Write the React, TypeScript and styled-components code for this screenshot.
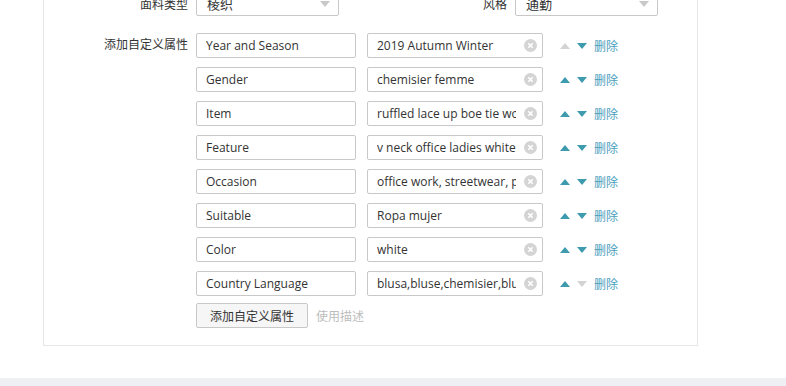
import React from "react";
import styled, { createGlobalStyle } from "styled-components";

const Global = createGlobalStyle`
  html, body { margin: 0; padding: 0; background: #fff; }
  body { overflow: hidden; font-family: "Open Sans", "Noto Sans CJK SC", sans-serif; color: #333; }
`;

const Page = styled.div`
  width: 786px;
  height: 386px;
  display: flex;
  flex-direction: column;
  overflow: hidden;
`;

const Content = styled.div`
  flex: 1;
  padding: 0 88px 0 43px;
`;

const Panel = styled.div`
  margin-top: -19px;
  padding: 10px 0 17px;
  border: 1px solid #e6e6e6;
  border-top: none;
  width: 653px;
  display: flex;
  flex-direction: column;
  gap: 17px;
`;

const FieldRow = styled.div`
  display: flex;
  align-items: flex-start;
`;

const Label = styled.div<{ $w?: number }>`
  width: ${(p) => p.$w ?? 152}px;
  box-sizing: border-box;
  padding-right: 8px;
  text-align: right;
  font-family: "Noto Sans CJK SC", sans-serif;
  font-size: 12px;
  line-height: ${(p) => (p.$w ? 25 : 22)}px;
  color: #333;
  flex-shrink: 0;
`;

const Select = styled.div<{ $ml?: number }>`
  position: relative;
  width: 143px;
  height: 25px;
  box-sizing: border-box;
  border: 1px solid #c8c8c8;
  border-radius: 2px;
  padding-left: 10px;
  font-family: "Noto Sans CJK SC", sans-serif;
  font-size: 13px;
  line-height: 23px;
  color: #333;
  margin-right: ${(p) => p.$ml ?? 0}px;
`;

const Caret = styled.span`
  position: absolute;
  right: 8px;
  top: 9px;
  width: 0;
  height: 0;
  border-left: 5px solid transparent;
  border-right: 5px solid transparent;
  border-top: 6px solid #c9c9c9;
`;

const AttrList = styled.div`
  display: flex;
  flex-direction: column;
  gap: 9px;
`;

const AttrRow = styled.div`
  display: flex;
  align-items: center;
  height: 25px;
`;

const TextInput = styled.input<{ $w: number; $pr?: number }>`
  width: ${(p) => p.$w}px;
  height: 25px;
  box-sizing: border-box;
  border: 1px solid #c8c8c8;
  border-radius: 2px;
  padding: 0 ${(p) => p.$pr ?? 6}px 0 9px;
  font-family: "Open Sans", "Noto Sans CJK SC", sans-serif;
  font-size: 12px;
  color: #333;
  background: #fff;
  outline: none;
`;

const ValueBox = styled.div`
  position: relative;
  margin-left: 11px;
  display: flex;
`;

const ClearIcon = styled.svg`
  position: absolute;
  right: 6px;
  top: 6px;
`;

const Controls = styled.div`
  display: flex;
  align-items: center;
  margin-left: 17px;
  gap: 7px;
`;

const Arrow = styled.svg<{ $on: boolean }>`
  fill: ${(p) => (p.$on ? "#3e9bae" : "#d3d3d3")};
  display: block;
`;

const DeleteLink = styled.a`
  font-family: "Noto Sans CJK SC", sans-serif;
  font-size: 12px;
  color: #4a9dbd;
  text-decoration: none;
  cursor: pointer;
`;

const ActionRow = styled.div`
  display: flex;
  align-items: center;
  margin-top: 7px;
  gap: 8px;
`;

const Button = styled.button`
  height: 25px;
  box-sizing: border-box;
  padding: 0 13px;
  border: 1px solid #c8c8c8;
  border-radius: 2px;
  background: #f6f6f6;
  font-family: "Noto Sans CJK SC", sans-serif;
  font-size: 12px;
  color: #333;
`;

const Hint = styled.span`
  font-family: "Noto Sans CJK SC", sans-serif;
  font-size: 12px;
  color: #bdbdbd;
`;

const Footer = styled.div`
  height: 8px;
  background: #eff0f3;
`;

const attrs: [string, string][] = [
  ["Year and Season", "2019 Autumn Winter"],
  ["Gender", "chemisier femme"],
  ["Item", "ruffled lace up boe tie women blouse"],
  ["Feature", "v neck office ladies white blouse"],
  ["Occasion", "office work, streetwear, party"],
  ["Suitable", "Ropa mujer"],
  ["Color", "white"],
  ["Country Language", "blusa,bluse,chemisier,blusas"],
];

const Up = ({ on }: { on: boolean }) => (
  <Arrow $on={on} width="10" height="6" viewBox="0 0 10 6">
    <polygon points="0,6 10,6 5,0" />
  </Arrow>
);
const Down = ({ on }: { on: boolean }) => (
  <Arrow $on={on} width="10" height="6" viewBox="0 0 10 6">
    <polygon points="0,0 10,0 5,6" />
  </Arrow>
);

export default function App() {
  return (
    <Page>
      <Global />
      <Content>
        <Panel>
          <FieldRow>
            <Label $w={152}>面料类型</Label>
            <Select $ml={24}>
              棱织
              <Caret />
            </Select>
            <Label $w={152}>风格</Label>
            <Select>
              通勤
              <Caret />
            </Select>
          </FieldRow>
          <FieldRow>
            <Label>添加自定义属性</Label>
            <div>
              <AttrList>
                {attrs.map(([k, v], i) => (
                  <AttrRow key={k}>
                    <TextInput $w={160} readOnly defaultValue={k} />
                    <ValueBox>
                      <TextInput $w={176} $pr={26} readOnly defaultValue={v} />
                      <ClearIcon width="13" height="13" viewBox="0 0 13 13">
                        <circle cx="6.5" cy="6.5" r="6.5" fill="#d4d4d4" />
                        <path d="M4.3 4.3 L8.7 8.7 M8.7 4.3 L4.3 8.7" stroke="#fff" strokeWidth="1.6" />
                      </ClearIcon>
                    </ValueBox>
                    <Controls>
                      <Up on={i !== 0} />
                      <Down on={i !== attrs.length - 1} />
                      <DeleteLink>删除</DeleteLink>
                    </Controls>
                  </AttrRow>
                ))}
              </AttrList>
              <ActionRow>
                <Button>添加自定义属性</Button>
                <Hint>使用描述</Hint>
              </ActionRow>
            </div>
          </FieldRow>
        </Panel>
      </Content>
      <Footer />
    </Page>
  );
}
